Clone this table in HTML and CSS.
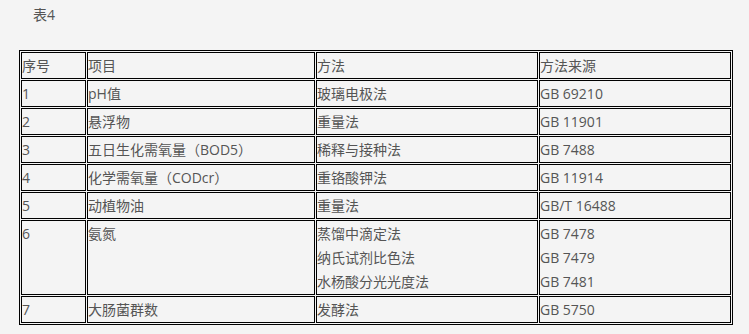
FILE: index.html
```html
<!DOCTYPE html>
<html lang="zh-CN">
<head>
<meta charset="utf-8">
<title>表4</title>
<link rel="stylesheet" href="styles.css">
</head>
<body>
<div class="page">
  <p class="caption">表4</p>
  <table class="data">
    <colgroup>
      <col class="c1"><col class="c2"><col class="c3"><col class="c4">
    </colgroup>
    <tr><td>序号</td><td>项目</td><td>方法</td><td>方法来源</td></tr>
    <tr><td>1</td><td>pH值</td><td>玻璃电极法</td><td>GB 69210</td></tr>
    <tr><td>2</td><td>悬浮物</td><td>重量法</td><td>GB 11901</td></tr>
    <tr><td>3</td><td>五日生化需氧量（BOD5）</td><td>稀释与接种法</td><td>GB 7488</td></tr>
    <tr><td>4</td><td>化学需氧量（CODcr）</td><td>重铬酸钾法</td><td>GB 11914</td></tr>
    <tr><td>5</td><td>动植物油</td><td>重量法</td><td>GB/T 16488</td></tr>
    <tr><td>6</td><td>氨氮</td><td>蒸馏中滴定法<br>纳氏试剂比色法<br>水杨酸分光光度法</td><td>GB 7478<br>GB 7479<br>GB 7481</td></tr>
    <tr><td>7</td><td>大肠菌群数</td><td>发酵法</td><td>GB 5750</td></tr>
  </table>
</div>
</body>
</html>
```

FILE: styles.css
```css
html, body {
  margin: 0;
  padding: 0;
  background: #f4f4f4;
}
body {
  font-family: "Open Sans", "Noto Sans CJK SC", sans-serif;
  font-size: 14px;
  line-height: 24px;
  color: #555;
}
.page {
  padding: 3px 0 0 19px;
}
.caption {
  margin: 0 0 23px 14px;
}
.data {
  border: 1px solid #000;
  border-collapse: separate;
  border-spacing: 1px;
  width: 714px;
  table-layout: fixed;
}
.data td {
  border: 1px solid #000;
  padding: 1px 0 0 0;
  vertical-align: top;
  line-height: 24px;
  white-space: nowrap;
}
.c1 { width: 65px; }
.c2 { width: 228px; }
.c3 { width: 222px; }
.c4 { width: 192px; }
```
